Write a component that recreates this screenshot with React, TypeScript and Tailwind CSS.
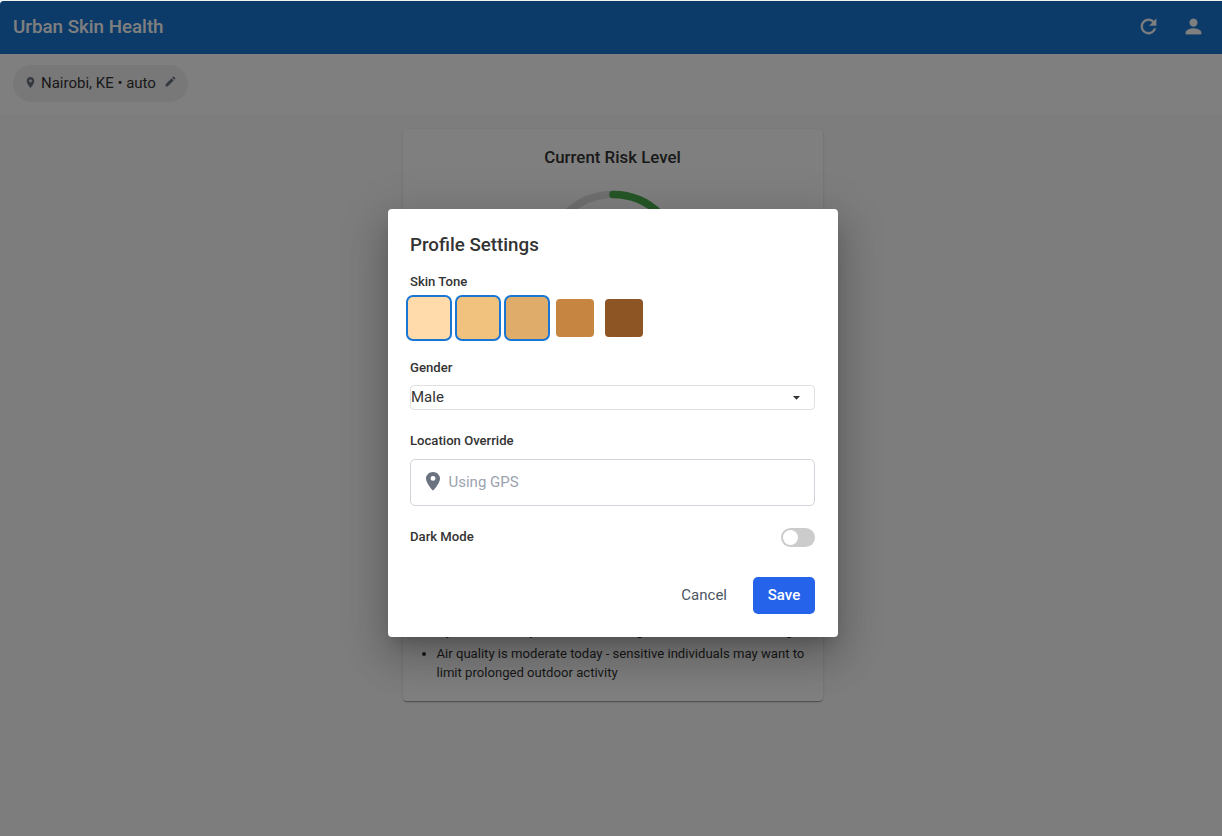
import { MdLocationOn, MdEdit, MdArrowDropDown } from "react-icons/md";

const tones = [
  { color: "bg-[#ffdbac]", selected: true },
  { color: "bg-[#f1c27d]", selected: true },
  { color: "bg-[#e0ac69]", selected: true },
  { color: "bg-[#c68642]", selected: false },
  { color: "bg-[#8d5524]", selected: false },
];

function HeaderIcon({ d }: { d: string }) {
  return (
    <svg viewBox="0 0 24 24" fill="currentColor" stroke="currentColor" strokeWidth="0.4" className="size-[23px]">
      <path d={d} />
    </svg>
  );
}

function Header() {
  return (
    <header className="flex h-[53px] shrink-0 items-center justify-between bg-[#1976d2] pb-[2px] pl-[13px] pr-[17px] text-white">
      <h1 className="text-[18.75px] font-medium leading-6">Urban Skin Health</h1>
      <div className="flex items-center gap-[22px]">
        <HeaderIcon d="M17.65 6.35C16.2 4.9 14.21 4 12 4c-4.42 0-7.99 3.58-7.99 8s3.57 8 7.99 8c3.73 0 6.84-2.55 7.73-6h-2.08c-.82 2.33-3.04 4-5.65 4-3.31 0-6-2.69-6-6s2.69-6 6-6c1.66 0 3.14.69 4.22 1.78L13 11h7V4l-2.35 2.35z" />
        <HeaderIcon d="M12 12c2.21 0 4-1.79 4-4s-1.79-4-4-4-4 1.79-4 4 1.79 4 4 4zm0 2c-2.67 0-8 1.34-8 4v2h16v-2c0-2.66-5.33-4-8-4z" />
      </div>
    </header>
  );
}

function RiskCard() {
  return (
    <section className="mx-auto mt-[15px] flex h-[572px] w-[420px] translate-x-[2px] flex-col rounded bg-white px-[15px] text-[#333] shadow-[0_2px_1px_-1px_rgba(0,0,0,0.2),0_1px_1px_rgba(0,0,0,0.14),0_1px_3px_rgba(0,0,0,0.12)]">
      <h2 className="mt-[16px] -ml-px text-center text-[16.875px] font-medium leading-6">Current Risk Level</h2>
      <svg className="mx-auto mt-[21px] size-[142px] shrink-0" viewBox="0 0 142 142" fill="none" strokeWidth="7.6">
        <circle cx="71" cy="71" r="66.5" stroke="#e0e0e0" />
        <path d="M71 4.5A66.5 66.5 0 0 1 137.5 71" stroke="#4caf50" strokeLinecap="round" />
      </svg>
      <ul className="-mr-1 mb-[19px] mt-auto list-disc space-y-[4px] pl-[18.5px] text-[13.125px] leading-[19px]">
        <li>Hydrate normally and dress in all light, breathable UV clothing</li>
        <li>Air quality is moderate today - sensitive individuals may want to limit prolonged outdoor activity</li>
      </ul>
    </section>
  );
}

function ProfileDialog() {
  return (
    <div role="dialog" className="flex h-[428px] w-[450px] translate-x-[2px] translate-y-[4px] flex-col rounded bg-white px-[22px] pr-[23px] text-[#333] shadow-[0_11px_15px_-7px_rgba(0,0,0,0.2),0_24px_38px_3px_rgba(0,0,0,0.14),0_9px_46px_8px_rgba(0,0,0,0.12)]">
      <h2 className="mt-[23px] text-[18.75px] font-medium leading-[26px]">Profile Settings</h2>
      <h3 className="mt-[14px] text-[13.125px] font-medium leading-5">Skin Tone</h3>
      <div className="-ml-[4px] mt-[3px] flex gap-[3px]">
        {tones.map((t) => (
          <button
            key={t.color}
            aria-label="Skin tone"
            className={`h-[46px] ${t.selected ? `w-[46px] rounded-[7px] border-2 border-[#1976d2] ${t.color}` : "w-[46px] p-[4px] -ml-px mr-px"}`}
          >
            {!t.selected && <span className={`block size-[38px] rounded ${t.color}`} />}
          </button>
        ))}
      </div>
      <h3 className="mt-[17px] text-[13.125px] font-medium leading-5">Gender</h3>
      <div className="mt-[7px] flex h-[25px] items-center justify-between rounded border border-[#e0e0e0] pr-[9px] text-[15px]">
        <span>Male</span>
        <MdArrowDropDown className="size-[17px]" />
      </div>
      <h3 className="mt-[21px] text-[13.125px] font-medium leading-5">Location Override</h3>
      <div className="mt-[8px] flex h-[47px] items-center gap-[3.5px] rounded-[5px] border border-[#d1d5db] pl-[10px] text-[15px]">
        <MdLocationOn preserveAspectRatio="none" className="mb-[2px] h-[22.5px] w-[24px] text-[#6b7280]" />
        <span className="text-[#9ca3af]">Using GPS</span>
      </div>
      <div className="mt-[21px] flex h-5 items-center justify-between">
        <h3 className="text-[13.125px] font-medium leading-5">Dark Mode</h3>
        <div className="mt-[2px] flex h-[19px] w-[34px] items-center rounded-full bg-[#ccc] pl-[2px]">
          <span className="size-[15px] rounded-full bg-white" />
        </div>
      </div>
      <div className="mt-[30px] flex justify-end text-[15px]">
        <button className="h-[37px] px-[26px] text-[#4b5563]">Cancel</button>
        <button className="h-[37px] w-[62px] rounded-[5px] bg-[#2563eb] font-medium text-white">Save</button>
      </div>
    </div>
  );
}

export default function App() {
  return (
    <div className="h-[836px] overflow-hidden bg-[#f0f2f3] pt-px font-[Roboto,sans-serif]">
      <div className="relative flex h-[835px] flex-col overflow-hidden rounded-tl-[4px] bg-[#fafafa]">
        <Header />
        <div className="flex h-[60px] shrink-0 items-center bg-white px-[13px] pb-[2px]">
          <div className="flex h-[37px] w-[175px] items-center rounded-full bg-[#f0f0f0] pl-[11px] text-[15px] text-[#333]">
            <MdLocationOn className="mb-px size-[13px] text-[#6b7280]" />
            <span className="ml-[4px]">Nairobi, KE • auto</span>
            <MdEdit className="mb-[3px] ml-[8px] size-[13px] text-[#6b7280]" />
          </div>
        </div>
        <RiskCard />
        <div className="absolute inset-0 flex items-center justify-center bg-black/50">
          <ProfileDialog />
        </div>
      </div>
    </div>
  );
}
